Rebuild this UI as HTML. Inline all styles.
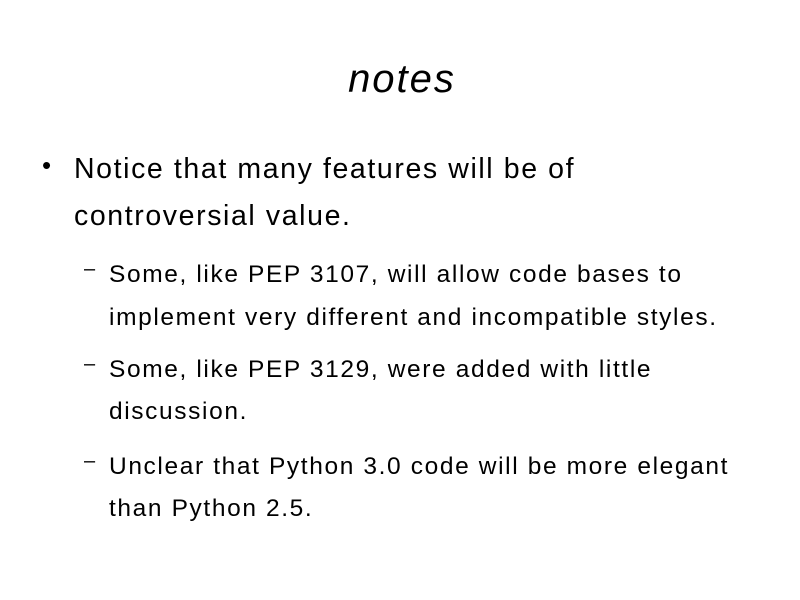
<!DOCTYPE html>
<html><head><style>
body{margin:0;width:800px;height:600px;background:#fff;font-family:"Liberation Sans",sans-serif;color:#000;position:relative;overflow:hidden}
.a{position:absolute;white-space:nowrap}
.t{font-style:italic;font-size:40px;left:2px;width:800px;text-align:center;top:57px;letter-spacing:2px}
.l1{font-size:28.5px;left:74px;letter-spacing:1.6px;top:0}
.l2{font-size:24.5px;left:109px;letter-spacing:1.62px}
</style></head><body>
<div class="a t">notes</div>
<div class="a" style="left:42px;top:150px;font-size:26px">•</div>
<div class="a l1" style="top:153px">Notice that many features will be of</div>
<div class="a l1" style="top:200px">controversial value.</div>
<div class="a" style="left:84px;top:258px;font-size:20px">–</div>
<div class="a l2" style="top:261px">Some, like PEP 3107, will allow code bases to</div>
<div class="a l2" style="top:304px">implement very different and incompatible styles.</div>
<div class="a" style="left:84px;top:353px;font-size:20px">–</div>
<div class="a l2" style="top:356px">Some, like PEP 3129, were added with little</div>
<div class="a l2" style="top:398px">discussion.</div>
<div class="a" style="left:84px;top:450px;font-size:20px">–</div>
<div class="a l2" style="top:453px">Unclear that Python 3.0 code will be more elegant</div>
<div class="a l2" style="top:495px">than Python 2.5.</div>
</body></html>
